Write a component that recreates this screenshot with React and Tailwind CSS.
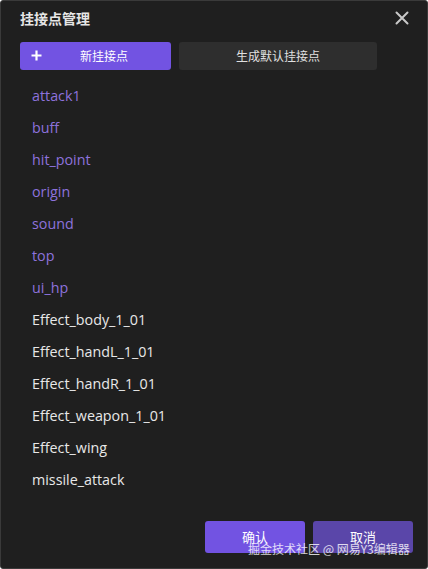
import React from "react";

const purple = ["attack1", "buff", "hit_point", "origin", "sound", "top", "ui_hp"];
const white = ["Effect_body_1_01", "Effect_handL_1_01", "Effect_handR_1_01", "Effect_weapon_1_01", "Effect_wing", "missile_attack"];

export default function App() {
  return (
    <div
      className="relative w-[428px] h-[569px] bg-[#1f1f1f] border border-[#3a3a3a] rounded-[3px] flex flex-col overflow-hidden"
      style={{ fontFamily: '"Open Sans", "Noto Sans CJK SC", sans-serif' }}
    >
      <div className="flex items-center justify-between h-[34px] pl-[19px] pr-[18px]">
        <span className="text-[14px] font-semibold text-[#e6e6e6]" style={{ fontFamily: '"Noto Sans CJK SC", sans-serif' }}>挂接点管理</span>
        <svg width="14" height="14" viewBox="0 0 14 14" className="text-[#c8c8c8]">
          <path d="M1.5 1.5 L12.5 12.5 M12.5 1.5 L1.5 12.5" stroke="currentColor" strokeWidth="2" strokeLinecap="round" />
        </svg>
      </div>
      <div className="flex gap-[8px] pl-[19px] mt-[7px]">
        <button className="relative w-[151px] h-[28px] rounded-[3px] bg-[#7253e2] text-[12px] text-white flex items-center justify-center" style={{ fontFamily: '"Noto Sans CJK SC", sans-serif' }}>
          <svg width="11" height="11" viewBox="0 0 11 11" className="absolute left-[11px] top-[8px]">
            <path d="M5.5 0.5 V10.5 M0.5 5.5 H10.5" stroke="white" strokeWidth="2.2" />
          </svg>
          <span className="ml-[17px]">新挂接点</span>
        </button>
        <button className="w-[198px] h-[28px] rounded-[3px] bg-[#2e2e2e] text-[12px] text-[#e0e0e0] flex items-center justify-center" style={{ fontFamily: '"Noto Sans CJK SC", sans-serif' }}>
          生成默认挂接点
        </button>
      </div>
      <div className="flex flex-col pl-[31px] mt-[10px]">
        {purple.map((t) => (
          <div key={t} className="h-[32px] flex items-center text-[14.3px] text-[#8d72dc]">{t}</div>
        ))}
        {white.map((t) => (
          <div key={t} className="h-[32px] flex items-center text-[14.3px] text-[#e8e8e8]">{t}</div>
        ))}
      </div>
      <div className="flex justify-end gap-[8px] pr-[14px] mt-auto mb-[15px]" style={{ fontFamily: '"Noto Sans CJK SC", sans-serif' }}>
        <button className="w-[100px] h-[32px] rounded-[3px] bg-[#7253e2] text-[13px] text-white">确认</button>
        <button className="w-[100px] h-[32px] rounded-[3px] bg-[#5a46a9] text-[13px] text-white">取消</button>
      </div>
      <div className="absolute left-[247px] top-[539px] text-[12px] text-white/80" style={{ fontFamily: '"Noto Sans CJK SC", sans-serif' }}>
        掘金技术社区 @ 网易Y3编辑器
      </div>
    </div>
  );
}
